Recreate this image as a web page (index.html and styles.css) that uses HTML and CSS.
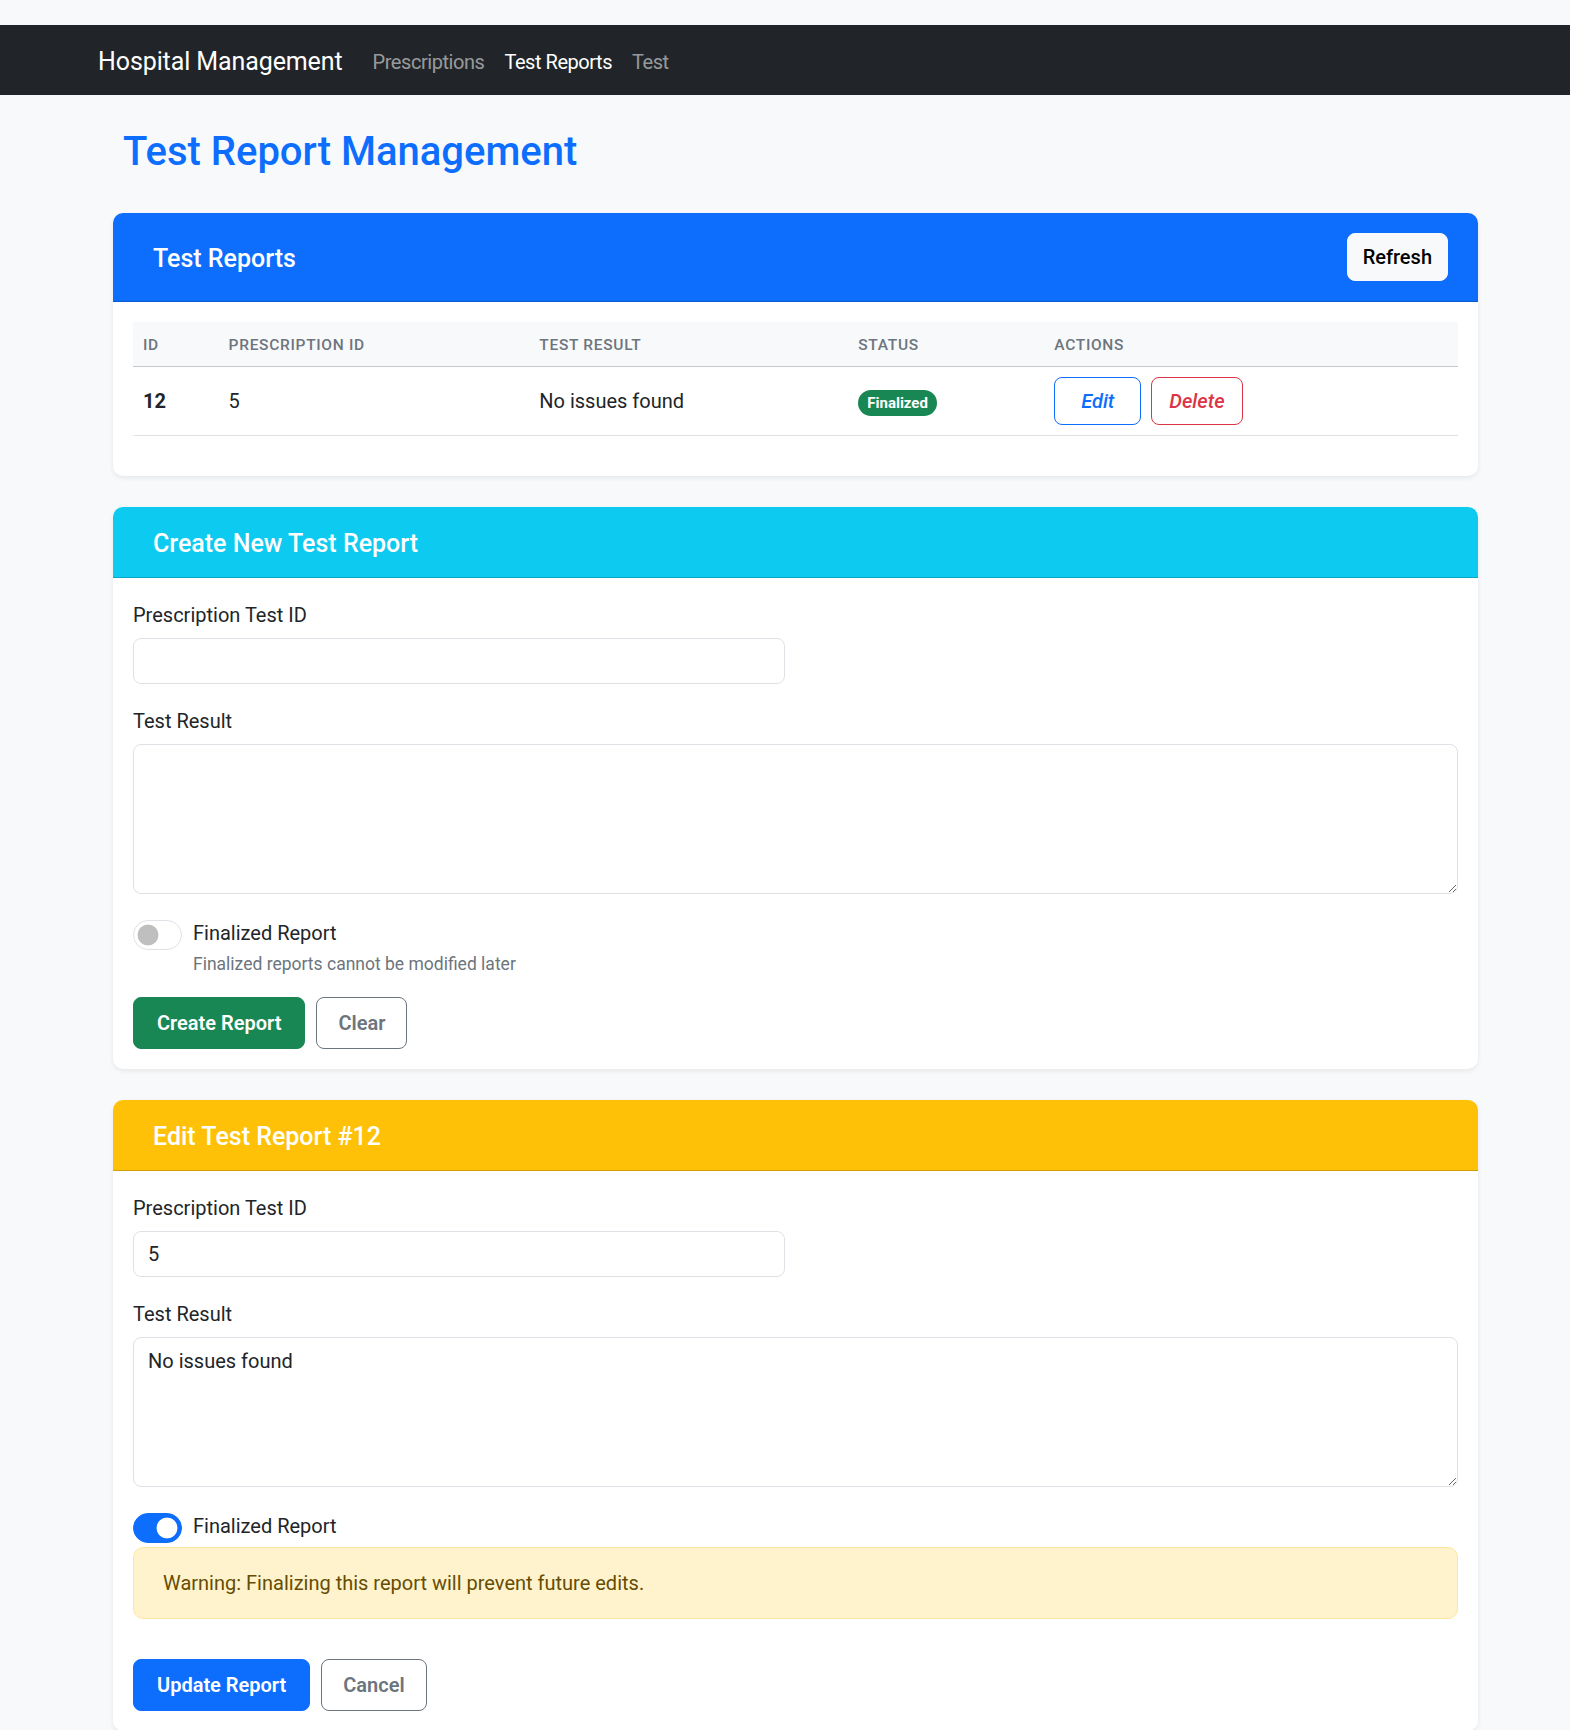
FILE: index.html
```html
<!DOCTYPE html>
<html lang="en">
<head>
<meta charset="utf-8">
<title>Test Report Management</title>
<link rel="stylesheet" href="styles.css">
</head>
<body>
<nav class="navbar">
  <a class="brand" href="#">Hospital Management</a>
  <ul class="nav">
    <li><a class="nav-link" href="#">Prescriptions</a></li>
    <li><a class="nav-link active" href="#">Test Reports</a></li>
    <li><a class="nav-link" href="#">Test</a></li>
  </ul>
</nav>

<main class="container">
  <h2 class="page-title">Test Report Management</h2>

  <section class="card">
    <div class="card-header header-primary header-flex">
      <h5 class="card-title">Test Reports</h5>
      <button class="btn-refresh" type="button">Refresh</button>
    </div>
    <div class="card-body">
      <table class="table">
        <thead>
          <tr>
            <th class="col-id">ID</th>
            <th class="col-presc">Prescription ID</th>
            <th class="col-result">Test Result</th>
            <th class="col-status">Status</th>
            <th>Actions</th>
          </tr>
        </thead>
        <tbody>
          <tr>
            <td class="cell-strong">12</td>
            <td>5</td>
            <td>No issues found</td>
            <td><span class="badge">Finalized</span></td>
            <td>
              <div class="actions">
                <button class="btn-row btn-row-edit" type="button">Edit</button>
                <button class="btn-row btn-row-delete" type="button">Delete</button>
              </div>
            </td>
          </tr>
        </tbody>
      </table>
    </div>
  </section>

  <section class="card">
    <div class="card-header header-info">
      <h5 class="card-title">Create New Test Report</h5>
    </div>
    <div class="card-body">
      <div class="form-group">
        <label class="form-label">Prescription Test ID</label>
        <input class="form-control input-half" type="text">
      </div>
      <div class="form-group">
        <label class="form-label">Test Result</label>
        <textarea class="form-control textarea"></textarea>
      </div>
      <div class="form-group">
        <div class="form-check">
          <input class="switch" type="checkbox">
          <label class="check-label">Finalized Report</label>
        </div>
        <div class="form-text">Finalized reports cannot be modified later</div>
      </div>
      <div class="btn-row-group">
        <button class="btn btn-success" type="button">Create Report</button>
        <button class="btn btn-outline" type="button">Clear</button>
      </div>
    </div>
  </section>

  <section class="card card-last">
    <div class="card-header header-warning">
      <h5 class="card-title">Edit Test Report #12</h5>
    </div>
    <div class="card-body">
      <div class="form-group">
        <label class="form-label">Prescription Test ID</label>
        <input class="form-control input-half" type="text" value="5">
      </div>
      <div class="form-group">
        <label class="form-label">Test Result</label>
        <textarea class="form-control textarea">No issues found</textarea>
      </div>
      <div class="form-check">
        <input class="switch" type="checkbox" checked>
        <label class="check-label">Finalized Report</label>
      </div>
      <div class="alert">Warning: Finalizing this report will prevent future edits.</div>
      <div class="btn-row-group">
        <button class="btn btn-primary" type="button">Update Report</button>
        <button class="btn btn-outline" type="button">Cancel</button>
      </div>
    </div>
  </section>
</main>
</body>
</html>
```

FILE: styles.css
```css
*, *::before, *::after { box-sizing: border-box; }

html, body { margin: 0; }

body {
  padding-top: 25px;
  background: #f8f9fa;
  font-family: Roboto, "Segoe UI", "Liberation Sans", sans-serif;
  font-size: 20px;
  line-height: 1.5;
  color: #212529;
}

/* Navbar */
.navbar {
  display: flex;
  align-items: center;
  height: 70px;
  padding-left: 98px;
  padding-top: 3px;
  background: #212529;
}
.brand {
  font-size: 25px;
  line-height: 37.5px;
  letter-spacing: -0.1px;
  color: #fff;
  text-decoration: none;
  margin-right: 20px;
}
.nav {
  display: flex;
  list-style: none;
  margin: 0;
  padding: 0;
}
.nav-link {
  display: block;
  padding: 10px;
  font-size: 20px;
  line-height: 30px;
  letter-spacing: -0.45px;
  color: rgba(255, 255, 255, 0.55);
  text-decoration: none;
}
.nav-link.active { color: #fff; }

/* Layout */
.container {
  width: 1365px;
  margin-left: 113px;
}
.page-title {
  margin: 33px 0 37px 10px;
  font-size: 40px;
  line-height: 48px;
  font-weight: 500;
  color: #0d6efd;
}

/* Cards */
.card {
  background: #fff;
  border-radius: 10px;
  box-shadow: 0 2px 5px rgba(0, 0, 0, 0.075);
  margin-bottom: 31px;
  overflow: hidden;
}
.card-last { margin-bottom: 0; }
.card-header {
  padding: 20px 40px;
  border-bottom: 1px solid rgba(0, 0, 0, 0.175);
  color: #fff;
}
.header-flex {
  display: flex;
  align-items: center;
  justify-content: space-between;
  padding-right: 30px;
}
.header-primary { background: #0d6efd; }
.header-info { background: #0dcaf0; }
.header-warning { background: #ffc107; }
.card-title {
  margin: 0;
  padding-top: 4px;
  font-size: 25px;
  line-height: 26px;
  font-weight: 500;
}
.card-body { padding: 20px; }

.btn-refresh {
  height: 48px;
  padding: 0 15px;
  border: 1px solid #f8f9fa;
  border-radius: 8px;
  background: #f8f9fa;
  color: #000;
  font-family: inherit;
  font-size: 20px;
  font-weight: 500;
}

/* Table */
.table {
  width: 100%;
  border-collapse: collapse;
  table-layout: fixed;
  margin-bottom: 20px;
}
.table th {
  padding: 11px 10px 9px;
  background: #f8f9fa;
  border-bottom: 1px solid #c6c7c8;
  text-align: left;
  text-transform: uppercase;
  font-size: 15.5px;
  line-height: 24px;
  font-weight: 500;
  letter-spacing: 0.7px;
  color: #6c757d;
}
.table td {
  padding: 10px;
  border-bottom: 1px solid #dee2e6;
  vertical-align: middle;
  line-height: 48px;
}
.col-id { width: 85.6px; }
.col-presc { width: 310.7px; }
.col-result { width: 319px; }
.col-status { width: 196px; }
.cell-strong { font-weight: 700; }

.badge {
  display: inline-block;
  height: 26px;
  padding: 0 9px;
  border-radius: 13px;
  background: #198754;
  color: #fff;
  font-size: 15px;
  line-height: 26px;
  font-weight: 700;
  vertical-align: middle;
}

.actions { display: flex; gap: 10px; }
.btn-row {
  height: 48px;
  min-width: 87px;
  padding: 0 17px;
  border-radius: 8px;
  background: #fff;
  font-family: inherit;
  font-size: 20px;
  font-style: italic;
  font-weight: 500;
}
.btn-row-edit { border: 1px solid #0d6efd; color: #0d6efd; }
.btn-row-delete { border: 1px solid #dc3545; color: #dc3545; }

/* Forms */
.form-group { margin-bottom: 20px; }
.form-label {
  display: block;
  padding-top: 2px;
  margin-bottom: 8px;
  line-height: 30px;
}
.form-control {
  display: block;
  border: 1px solid #dee2e6;
  border-radius: 8px;
  background: #fff;
  font-family: inherit;
  font-size: 20px;
  color: #212529;
  padding: 7px 14px;
}
.input-half {
  width: 652px;
  height: 46px;
}
.textarea {
  width: 100%;
  height: 150px;
  line-height: 30px;
  padding: 8px 14px 7px;
  resize: vertical;
}

.form-check {
  display: flex;
  align-items: flex-start;
  gap: 11px;
  padding-top: 3px;
}
.check-label { line-height: 30px; padding-top: 1px; }
.switch {
  appearance: none;
  -webkit-appearance: none;
  flex: none;
  width: 49px;
  height: 30px;
  margin: 3px 0 0 0;
  border: 1px solid #dee2e6;
  border-radius: 15px;
  background: #fff radial-gradient(circle at 14px 50%, #bfbfbf 10px, transparent 10.8px);
}
.switch:checked {
  border-color: #0d6efd;
  background: #0d6efd radial-gradient(circle at 33px 50%, #fff 10px, transparent 10.8px);
}
.form-text {
  margin-top: 1px;
  padding-left: 60px;
  font-size: 17.5px;
  line-height: 26.25px;
  color: #6c757d;
}

.alert {
  margin: 4px 0 40px;
  padding: 20px 29px 20px;
  border: 1px solid #ffe69c;
  border-radius: 10px;
  background: #fff3cd;
  color: #664d03;
  line-height: 30px;
}

/* Buttons */
.btn-row-group { display: flex; gap: 11px; }
.btn {
  height: 52px;
  padding: 0 23px;
  border-radius: 8px;
  font-family: inherit;
  font-size: 20px;
  font-weight: 600;
  line-height: 30px;
}
.btn-success { background: #198754; border: 1px solid #198754; color: #fff; }
.btn-primary { background: #0d6efd; border: 1px solid #0d6efd; color: #fff; }
.btn-outline { background: #fff; border: 1px solid #6c757d; color: #6c757d; padding: 0 21px; }
```
